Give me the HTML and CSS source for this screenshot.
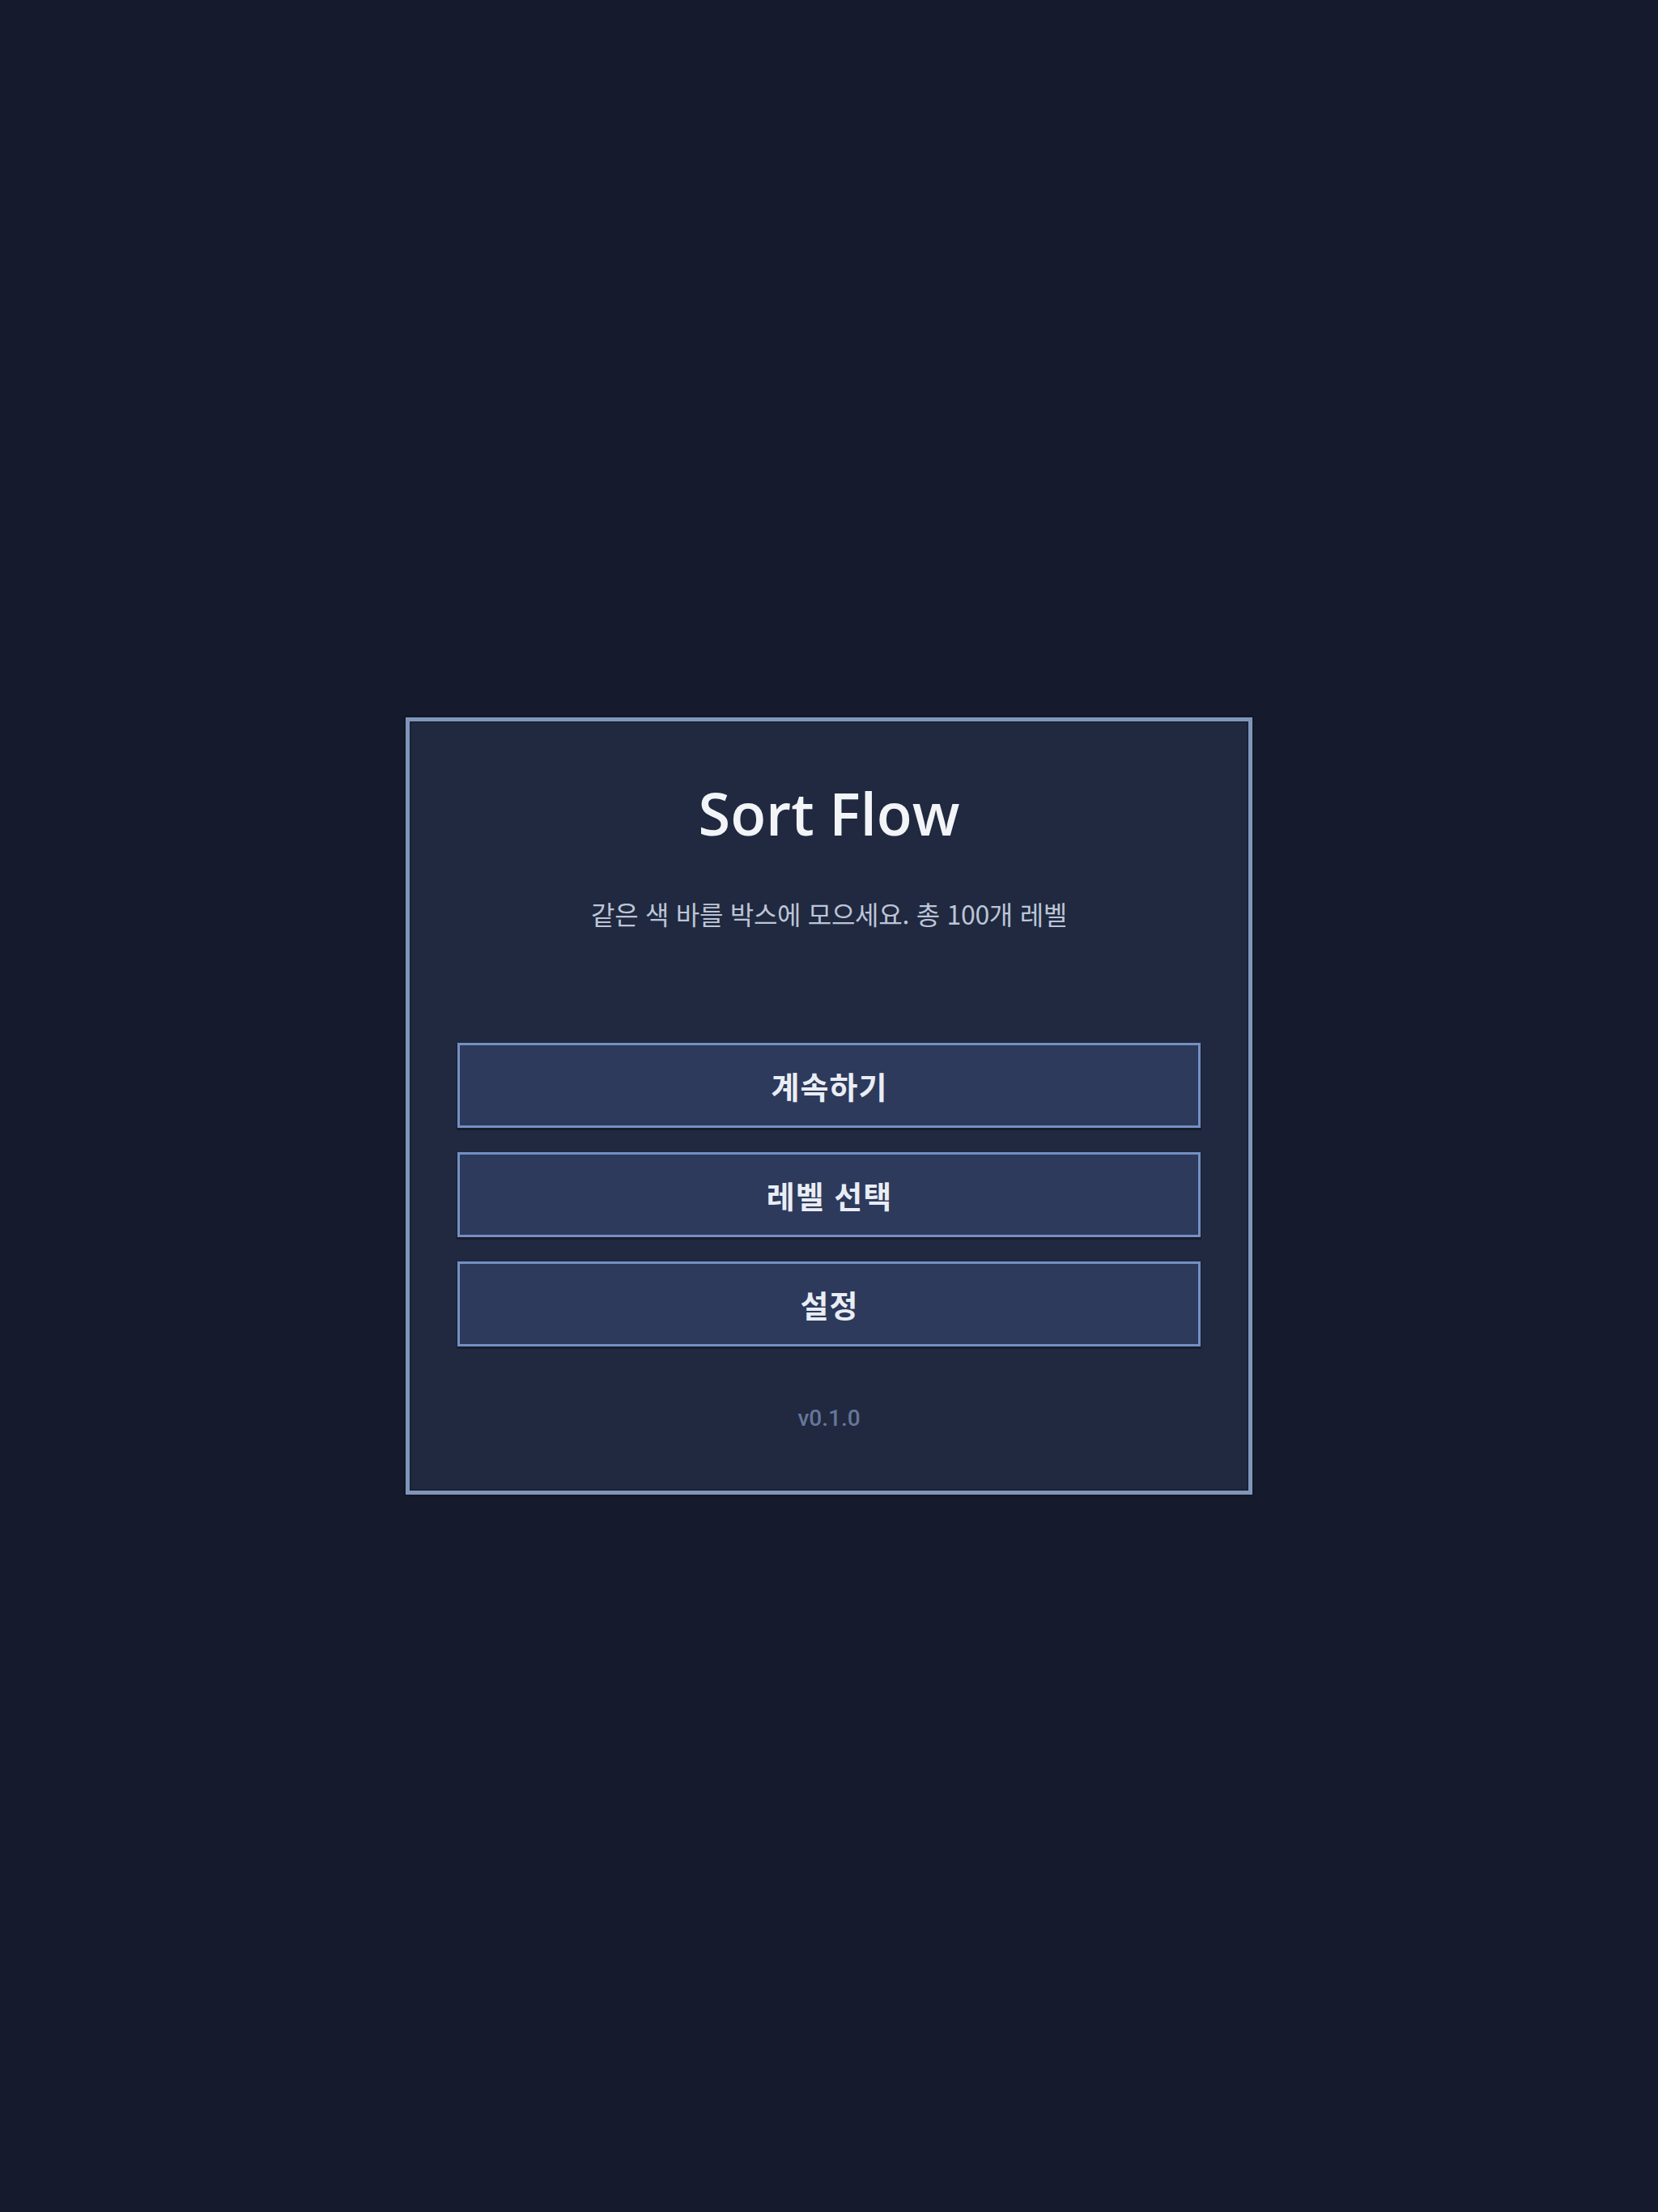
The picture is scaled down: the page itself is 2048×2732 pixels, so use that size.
FILE: index.html
```html
<!DOCTYPE html>
<html lang="ko">
<head>
<meta charset="utf-8">
<title>Sort Flow</title>
<link rel="stylesheet" href="styles.css">
</head>
<body>
<main class="screen">
  <section class="card">
    <h1 class="title">Sort Flow</h1>
    <p class="subtitle">같은 색 바를 박스에 모으세요. 총 100개 레벨</p>
    <div class="menu">
      <button class="menu-btn">계속하기</button>
      <button class="menu-btn">레벨 선택</button>
      <button class="menu-btn">설정</button>
    </div>
    <p class="version">v0.1.0</p>
  </section>
</main>
</body>
</html>
```

FILE: styles.css
```css
html, body {
  margin: 0;
  padding: 0;
  background: #151a2c;
}

.screen {
  width: 2048px;
  height: 2732px;
  display: flex;
  align-items: center;
  justify-content: center;
}

.card {
  box-sizing: border-box;
  width: 1046px;
  background: #20293f;
  border: 5px solid #8096b9;
  box-shadow: 0 0 0 2px #10152299, inset 0 0 0 2px #1a2235;
  padding: 75px 59px 74px;
  display: flex;
  flex-direction: column;
  align-items: stretch;
  text-align: center;
}

.title {
  margin: 0;
  font-family: "Open Sans", "Noto Sans", sans-serif;
  font-weight: 600;
  font-size: 72px;
  line-height: 76px;
  color: #f2f4f8;
}

.subtitle {
  margin: 66px 0 0;
  font-family: "Noto Sans CJK KR", "Noto Sans", sans-serif;
  font-size: 32px;
  line-height: 40px;
  letter-spacing: -0.3px;
  color: #bcc5d7;
}

.menu {
  margin-top: 140px;
  display: flex;
  flex-direction: column;
  gap: 30px;
}

.menu-btn {
  box-sizing: border-box;
  height: 105px;
  width: 100%;
  background: #2d3a5c;
  border: 3px solid #7390c2;
  border-radius: 0;
  box-shadow: 0 2px 0 1px #171d2e;
  font-family: "Noto Sans CJK KR", "Noto Sans", sans-serif;
  font-weight: 700;
  font-size: 38px;
  letter-spacing: 1px;
  text-indent: 1px;
  color: #e9edf4;
  padding: 0;
}

.version {
  margin: 74px 0 0;
  font-family: "Roboto", "Liberation Sans", sans-serif;
  font-weight: 500;
  font-size: 28px;
  line-height: 30px;
  color: #66769a;
}
```
